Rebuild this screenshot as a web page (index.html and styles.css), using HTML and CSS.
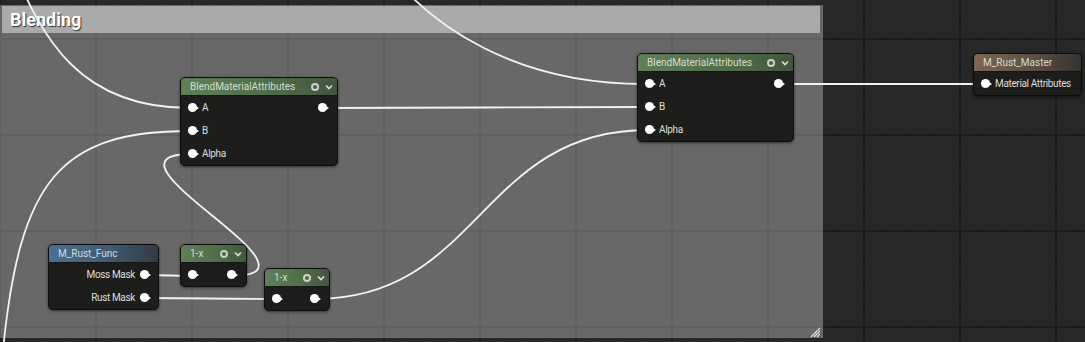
FILE: index.html
```html
<!DOCTYPE html>
<html lang="en">

<head>
    <meta charset="UTF-8" />
    <title>Material Graph - Blending</title>
    <link rel="stylesheet" href="styles.css">
</head>

<body>
    <div class="graph">
        <!-- comment box -->
        <div class="comment">
            <div class="comment-title">Blending</div>
            <svg class="grip" width="10" height="10" viewBox="0 0 10 10">
                <path d="M1 10 L10 1 M4 10 L10 4 M7 10 L10 7" stroke="#e8e8e8" stroke-width="1.2" />
            </svg>
        </div>

        <!-- wires -->
        <svg class="wires" width="1085" height="342" viewBox="0 0 1085 342">
            <g fill="none" stroke="#f2f2f2" stroke-width="1.8" stroke-linecap="round">
                <path d="M10,-40 C42,40 80,108 190,108" />
                <path d="M380,-40 C430,30 520,84 645,84" />
                <path d="M323,108 C480,108 490,107 645,107" />
                <path d="M779,84 L986,84" />
                <path d="M3,350 C20,180 60,131 190,131" />
                <path d="M231,276 C341,276 82,154 192,154" />
                <path d="M145,275 C170,275 170,276 192,276" />
                <path d="M145,298 C210,298 210,299 276,299" />
                <path d="M315,299 C480,299 480,130 648,130" />
            </g>
        </svg>

        <!-- nodes -->
        <div class="node" style="left:180px; top:77px; width:158px;">
            <div class="node-head green">
                <span class="node-title">BlendMaterialAttributes</span>
                <svg class="head-icons" width="24" height="10" viewBox="0 0 24 10">
                    <circle cx="4" cy="5" r="3" fill="none" stroke="#cfcfcf" stroke-width="2" />
                    <path d="M15 3.5 L18 6.5 L21 3.5" fill="none" stroke="#e0e0e0" stroke-width="1.6" />
                </svg>
            </div>
            <div class="node-body">
                <div class="row"><span class="in"><i class="pin"></i>A</span><i class="pin"></i></div>
                <div class="row"><span class="in"><i class="pin"></i>B</span></div>
                <div class="row"><span class="in"><i class="pin"></i>Alpha</span></div>
            </div>
        </div>

        <div class="node" style="left:637px; top:53px; width:157px;">
            <div class="node-head green">
                <span class="node-title">BlendMaterialAttributes</span>
                <svg class="head-icons" width="24" height="10" viewBox="0 0 24 10">
                    <circle cx="4" cy="5" r="3" fill="none" stroke="#cfcfcf" stroke-width="2" />
                    <path d="M15 3.5 L18 6.5 L21 3.5" fill="none" stroke="#e0e0e0" stroke-width="1.6" />
                </svg>
            </div>
            <div class="node-body">
                <div class="row"><span class="in"><i class="pin"></i>A</span><i class="pin"></i></div>
                <div class="row"><span class="in"><i class="pin"></i>B</span></div>
                <div class="row"><span class="in"><i class="pin"></i>Alpha</span></div>
            </div>
        </div>

        <div class="node" style="left:973px; top:53px; width:109px;">
            <div class="node-head brown">
                <span class="node-title">M_Rust_Master</span>
            </div>
            <div class="node-body">
                <div class="row"><span class="in"><i class="pin"></i>Material Attributes</span></div>
            </div>
        </div>

        <div class="node" style="left:48px; top:244px; width:111px;">
            <div class="node-head blue">
                <span class="node-title">M_Rust_Func</span>
            </div>
            <div class="node-body">
                <div class="row out"><span class="label">Moss Mask</span><i class="pin"></i></div>
                <div class="row out"><span class="label">Rust Mask</span><i class="pin"></i></div>
            </div>
        </div>

        <div class="node" style="left:180px; top:244px; width:67px;">
            <div class="node-head green">
                <span class="node-title">1-x</span>
                <svg class="head-icons" width="24" height="10" viewBox="0 0 24 10">
                    <circle cx="4" cy="5" r="3" fill="none" stroke="#cfcfcf" stroke-width="2" />
                    <path d="M15 3.5 L18 6.5 L21 3.5" fill="none" stroke="#e0e0e0" stroke-width="1.6" />
                </svg>
            </div>
            <div class="node-body">
                <div class="row"><span class="in"><i class="pin"></i></span><i class="pin"></i></div>
            </div>
        </div>

        <div class="node" style="left:264px; top:268px; width:66px;">
            <div class="node-head green">
                <span class="node-title">1-x</span>
                <svg class="head-icons" width="24" height="10" viewBox="0 0 24 10">
                    <circle cx="4" cy="5" r="3" fill="none" stroke="#cfcfcf" stroke-width="2" />
                    <path d="M15 3.5 L18 6.5 L21 3.5" fill="none" stroke="#e0e0e0" stroke-width="1.6" />
                </svg>
            </div>
            <div class="node-body">
                <div class="row"><span class="in"><i class="pin"></i></span><i class="pin"></i></div>
            </div>
        </div>
    </div>
</body>

</html>
```

FILE: styles.css
```css
* {
    box-sizing: border-box;
    margin: 0;
    padding: 0;
}

body {
    font-family: Roboto, 'Liberation Sans', sans-serif;
    background: #282828;
    overflow: hidden;
}

.graph {
    position: relative;
    width: 1085px;
    height: 342px;
    overflow: hidden;
    background-color: #282828;
    background-image:
        linear-gradient(to right, #1c1c1c 2px, transparent 2px),
        linear-gradient(to bottom, #1c1c1c 2px, transparent 2px),
        linear-gradient(to right, #252525 1px, transparent 1px),
        linear-gradient(to bottom, #252525 1px, transparent 1px);
    background-size: 96px 96px, 96px 96px, 12px 12px, 12px 12px;
    background-position: -1px 0, 0 38px, 0 0, 0 2px;
}

/* comment box */
.comment {
    position: absolute;
    left: 0;
    top: 5px;
    width: 823px;
    height: 333px;
    background: rgba(255, 255, 255, 0.3);
    padding: 1px 3px 0 2px;
}

.comment-title {
    height: 27px;
    background: #aaaaaa;
    color: #fff;
    font-weight: 700;
    font-size: 18px;
    line-height: 27px;
    padding-left: 8px;
    text-shadow: 1px 1px 1px rgba(0, 0, 0, 0.7);
}

.grip {
    position: absolute;
    right: 3px;
    bottom: 1px;
}

.wires {
    position: absolute;
    left: 0;
    top: 0;
}

/* nodes */
.node {
    position: absolute;
    background: #1d1e1c;
    border: 1px solid #0c0c0c;
    border-radius: 5px;
    box-shadow: 0 1px 3px rgba(0, 0, 0, 0.55);
    overflow: hidden;
    color: #dedede;
}

.node-head {
    height: 18px;
    display: flex;
    align-items: center;
    padding: 0 2px 0 9px;
    border-bottom: 1px solid #141414;
    font-size: 10px;
    color: #d6dcd3;
}

.node-title {
    flex: 1;
    white-space: nowrap;
}

.green {
    background: linear-gradient(to right, #5f8057, #506e49 55%, #42563d);
}

.blue {
    background: linear-gradient(to right, #4b7192, #3f5b73 55%, #333a41);
}

.brown {
    background: linear-gradient(to right, #7d6753, #5d4f42 55%, #363230);
}

.row {
    height: 23px;
    display: flex;
    align-items: center;
    justify-content: space-between;
    padding: 0 10px 0 7px;
    font-size: 10px;
    letter-spacing: -0.35px;
    white-space: nowrap;
}

.row.out {
    justify-content: flex-end;
    padding-right: 9px;
}

.in {
    display: flex;
    align-items: center;
}

.in .pin {
    margin-right: 5px;
}

.label {
    margin-right: 5px;
}

.pin {
    position: relative;
    display: inline-block;
    flex-shrink: 0;
    width: 9px;
    height: 9px;
    border-radius: 50%;
    background: #ffffff;
}

.pin::after {
    content: '';
    position: absolute;
    right: -2px;
    top: 2.5px;
    border-left: 3px solid #ffffff;
    border-top: 2px solid transparent;
    border-bottom: 2px solid transparent;
}
```
